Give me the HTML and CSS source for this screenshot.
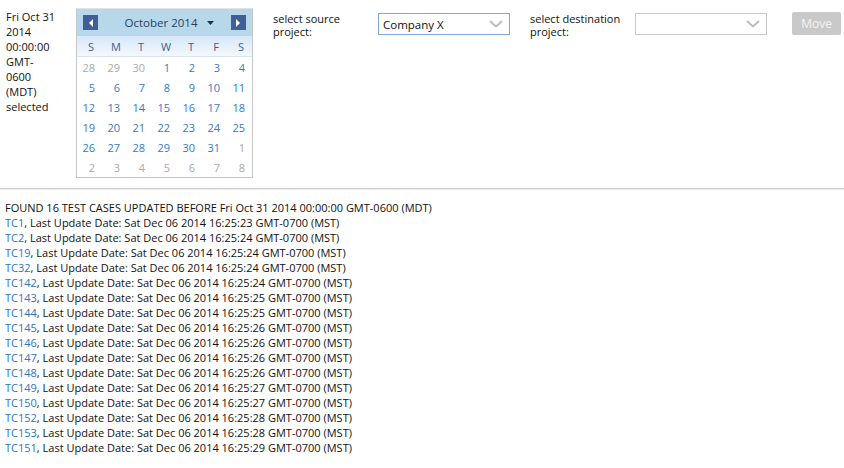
FILE: index.html
```html
<!DOCTYPE html>
<html>
<head>
<meta charset="utf-8">
<link rel="stylesheet" href="styles.css">
</head>
<body>
<div class="top">
  <div class="sel-text">Fri Oct 31 2014 00:00:00 GMT-0600 (MDT) selected</div>
  <div class="cal">
    <div class="cal-head">
      <span class="nav"><svg width="6" height="8" viewBox="0 0 6 8"><path d="M5 0 L1 4 L5 8 Z" fill="#fff"/></svg></span>
      <span class="month">October 2014 <svg class="caret" width="7" height="4" viewBox="0 0 7 4"><path d="M0 0 H7 L3.5 4 Z" fill="#1f2f4f"/></svg></span>
      <span class="nav"><svg width="6" height="8" viewBox="0 0 6 8"><path d="M1 0 L5 4 L1 8 Z" fill="#fff"/></svg></span>
    </div>
    <div class="cal-days">
      <span>S</span><span>M</span><span>T</span><span>W</span><span>T</span><span>F</span><span>S</span>
    </div>
    <div class="cal-grid">
      <span class="o">28</span><span class="o">29</span><span class="o">30</span><span>1</span><span>2</span><span>3</span><span>4</span>
      <span>5</span><span>6</span><span>7</span><span>8</span><span>9</span><span>10</span><span>11</span>
      <span>12</span><span>13</span><span>14</span><span>15</span><span>16</span><span>17</span><span>18</span>
      <span>19</span><span>20</span><span>21</span><span>22</span><span>23</span><span>24</span><span>25</span>
      <span>26</span><span>27</span><span>28</span><span>29</span><span>30</span><span>31</span><span class="o">1</span>
      <span class="o">2</span><span class="o">3</span><span class="o">4</span><span class="o">5</span><span class="o">6</span><span class="o">7</span><span class="o">8</span>
    </div>
  </div>
  <div class="label">select source project:</div>
  <div class="select active">Company X<svg class="chev" width="14" height="8" viewBox="0 0 14 8"><path d="M1 1 L7 6.5 L13 1" fill="none" stroke="#bbb" stroke-width="2"/></svg></div>
  <div class="label">select destination project:</div>
  <div class="select"><svg class="chev" width="14" height="8" viewBox="0 0 14 8"><path d="M1 1 L7 6.5 L13 1" fill="none" stroke="#bbb" stroke-width="2"/></svg></div>
  <button class="move">Move</button>
</div>
<hr class="sep">
<div class="results">
  <div>FOUND 16 TEST CASES UPDATED BEFORE Fri Oct 31 2014 00:00:00 GMT-0600 (MDT)</div>
  <div><a>TC1</a>, Last Update Date: Sat Dec 06 2014 16:25:23 GMT-0700 (MST)</div>
  <div><a>TC2</a>, Last Update Date: Sat Dec 06 2014 16:25:24 GMT-0700 (MST)</div>
  <div><a>TC19</a>, Last Update Date: Sat Dec 06 2014 16:25:24 GMT-0700 (MST)</div>
  <div><a>TC32</a>, Last Update Date: Sat Dec 06 2014 16:25:24 GMT-0700 (MST)</div>
  <div><a>TC142</a>, Last Update Date: Sat Dec 06 2014 16:25:24 GMT-0700 (MST)</div>
  <div><a>TC143</a>, Last Update Date: Sat Dec 06 2014 16:25:25 GMT-0700 (MST)</div>
  <div><a>TC144</a>, Last Update Date: Sat Dec 06 2014 16:25:25 GMT-0700 (MST)</div>
  <div><a>TC145</a>, Last Update Date: Sat Dec 06 2014 16:25:26 GMT-0700 (MST)</div>
  <div><a>TC146</a>, Last Update Date: Sat Dec 06 2014 16:25:26 GMT-0700 (MST)</div>
  <div><a>TC147</a>, Last Update Date: Sat Dec 06 2014 16:25:26 GMT-0700 (MST)</div>
  <div><a>TC148</a>, Last Update Date: Sat Dec 06 2014 16:25:26 GMT-0700 (MST)</div>
  <div><a>TC149</a>, Last Update Date: Sat Dec 06 2014 16:25:27 GMT-0700 (MST)</div>
  <div><a>TC150</a>, Last Update Date: Sat Dec 06 2014 16:25:27 GMT-0700 (MST)</div>
  <div><a>TC152</a>, Last Update Date: Sat Dec 06 2014 16:25:28 GMT-0700 (MST)</div>
  <div><a>TC153</a>, Last Update Date: Sat Dec 06 2014 16:25:28 GMT-0700 (MST)</div>
  <div><a>TC151</a>, Last Update Date: Sat Dec 06 2014 16:25:29 GMT-0700 (MST)</div>
</div>
</body>
</html>
```
FILE: styles.css
```css
html, body { margin: 0; padding: 0; background: #fff; }
body {
  font-family: "Open Sans", "Liberation Sans", sans-serif;
  font-size: 11px;
  color: #111;
}
.top {
  display: flex;
  align-items: flex-start;
  padding: 8px 0 0 6px;
}
.sel-text {
  width: 51px;
  line-height: 15px;
  margin-top: 1px;
  margin-right: 19px;
  flex-shrink: 0;
}
.cal {
  width: 175px;
  border: 1px solid #c6c6c6;
  border-top-color: #e3e3e3;
  flex-shrink: 0;
}
.cal-head {
  height: 27px;
  background: #b6d8ea;
  display: flex;
  align-items: center;
  justify-content: space-between;
  padding: 0 6px;
}
.nav {
  width: 15px;
  height: 15px;
  background: #3f5f95;
  display: flex;
  align-items: center;
  justify-content: center;
}
.month {
  font-size: 11.5px;
  color: #2c3e5c;
  margin-left: 10px;
  display: flex;
  align-items: center;
}
.caret { margin-left: 10px; }
.cal-days {
  height: 20px;
  display: grid;
  grid-template-columns: repeat(7, 25px);
  align-items: center;
  background: linear-gradient(#d6e7f7, #f3f8fd);
  border-bottom: 1px solid #d8e6f3;
  color: #3e5f8e;
}
.cal-days span { text-align: center; padding-left: 3px; }
.cal-grid {
  display: grid;
  grid-template-columns: repeat(7, 25px);
  grid-auto-rows: 20px;
  align-items: center;
  color: #3479c5;
}
.cal-grid span { text-align: right; padding-right: 7px; }
.cal-grid .o { color: #a9a9a9; }
.label {
  width: 105px;
  margin-left: 20px;
  margin-top: 4px;
  line-height: 13px;
  flex-shrink: 0;
}
.select {
  height: 20px;
  margin-top: 5px;
  border: 1px solid #c9c9c9;
  display: flex;
  align-items: center;
  padding: 0 6px 0 4px;
  box-sizing: content-box;
  width: 120px;
  font-size: 11.5px;
  flex-shrink: 0;
}
.select.active { border-color: #7fa8d8; }
.select .chev { margin-left: auto; }
.move {
  margin-left: 25px;
  margin-top: 4px;
  width: 49px;
  height: 23px;
  border: none;
  border-radius: 2px;
  background: #c9c9c9;
  color: #f4f4f4;
  font-family: inherit;
  font-size: 12px;
  padding: 0;
  flex-shrink: 0;
}
.sep {
  margin: 10px 0 0;
  border: none;
  border-top: 1px solid #cfcfcf;
  border-bottom: 1px solid #ececec;
  height: 0;
}
.results {
  padding: 10px 5px 0;
  line-height: 15px;
}
.results a { color: #2f74c0; }
```
